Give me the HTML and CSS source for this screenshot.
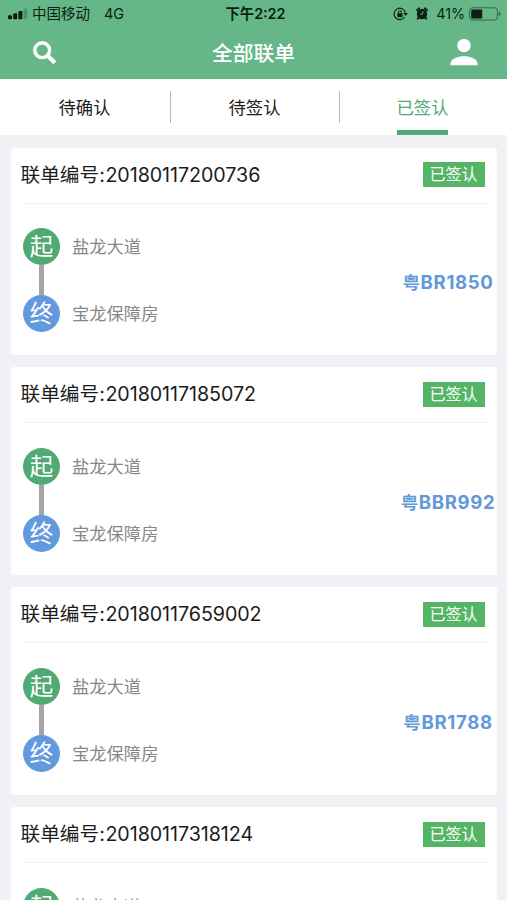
FILE: index.html
```html
<!DOCTYPE html>
<html lang="zh-CN">
<head>
<meta charset="utf-8">
<title>全部联单</title>
<link rel="stylesheet" href="styles.css">
</head>
<body>
<header class="header">
  <div class="status">
    <div class="status-left">
      <svg class="signal" width="20" height="12" viewBox="0 0 20 12"><rect x="0" y="7.2" width="4" height="4" rx="1"/><rect x="5.2" y="5.3" width="4" height="5.9" rx="1"/><rect x="10.4" y="3" width="4" height="8.2" rx="1"/><rect x="15.6" y="0.4" width="3.6" height="10.8" rx="1" opacity=".25"/></svg>
      <span class="carrier">中国移动</span><span class="network">4G</span>
    </div>
    <div class="clock">下午2:22</div>
    <div class="status-right">
      <svg class="lock" width="15" height="14" viewBox="0 0 15 14"><path d="M11.600 10A5.700 5.700 0 1 1 12.300 5.500" fill="none" stroke="#0b1f14" stroke-width="1.200"/><path d="M10.200 6h4.600l-2.200 3z"/><rect x="4.300" y="6.200" width="5.200" height="4" rx=".6"/><path d="M5.400 6.400V5.200a1.500 1.500 0 0 1 3 0v1.200" fill="none" stroke="#0b1f14"/></svg>
      <svg class="alarm" width="12" height="13" viewBox="0 0 12 13"><circle cx="6" cy="7" r="5.200"/><path d="M1 3.200 3.200 1.300M11 3.200 8.800 1.300M2.500 10.500l-.8 1.400M9.500 10.500l.8 1.400" stroke="#0b1f14" stroke-width="1.800" stroke-linecap="round"/><path d="M7.200 4.500 6.200 7.300H4.300" fill="none" stroke="#66b788" stroke-width="1"/></svg>
      <span class="percent">41%</span>
      <svg class="battery" width="32" height="14" viewBox="0 0 32 14"><rect x=".6" y=".8" width="27.800" height="12.200" rx="2.800" fill="none" stroke="#35634a" stroke-width="1"/><rect x="2.200" y="2.400" width="11" height="9" rx="1"/><path d="M29.700 4.800q2 .5 2 2.100t-2 2.100z" fill="#35634a"/></svg>
    </div>
  </div>
  <div class="nav">
    <svg class="search" width="24" height="24" viewBox="0 0 24 24"><circle cx="9.200" cy="9.200" r="7.400" fill="none" stroke="#fff" stroke-width="3.400"/><path d="m14.500 14.500 7.300 7.300" stroke="#fff" stroke-width="4.200"/></svg>
    <h1 class="title">全部联单</h1>
    <svg class="user" width="28" height="28" viewBox="0 0 28 28"><circle cx="14" cy="6.600" r="6.700"/><path d="M.5 26.200v-1.500C.5 19.700 7.500 17.200 14 17.200s13.500 2.500 13.500 7.500v1.500z"/></svg>
  </div>
</header>
<nav class="tabs">
  <a class="tab"><span class="tab-label">待确认</span></a>
  <a class="tab"><span class="tab-label">待签认</span></a>
  <a class="tab active"><span class="tab-label">已签认</span></a>
</nav>
<main class="list">
  <article class="card">
    <div class="card-head"><h2 class="number">联单编号:<span class="digits">20180117200736</span></h2><span class="badge">已签认</span></div>
    <div class="card-body">
      <div class="route">
        <div class="stop"><i class="dot start">起</i><span>盐龙大道</span></div>
        <div class="link"></div>
        <div class="stop"><i class="dot end">终</i><span>宝龙保障房</span></div>
      </div>
      <div class="plate"><span class="province">粤</span>BR1850</div>
    </div>
  </article>
  <article class="card">
    <div class="card-head"><h2 class="number">联单编号:<span class="digits">20180117185072</span></h2><span class="badge">已签认</span></div>
    <div class="card-body">
      <div class="route">
        <div class="stop"><i class="dot start">起</i><span>盐龙大道</span></div>
        <div class="link"></div>
        <div class="stop"><i class="dot end">终</i><span>宝龙保障房</span></div>
      </div>
      <div class="plate"><span class="province">粤</span>BBR992</div>
    </div>
  </article>
  <article class="card">
    <div class="card-head"><h2 class="number">联单编号:<span class="digits">20180117659002</span></h2><span class="badge">已签认</span></div>
    <div class="card-body">
      <div class="route">
        <div class="stop"><i class="dot start">起</i><span>盐龙大道</span></div>
        <div class="link"></div>
        <div class="stop"><i class="dot end">终</i><span>宝龙保障房</span></div>
      </div>
      <div class="plate"><span class="province">粤</span>BR1788</div>
    </div>
  </article>
  <article class="card">
    <div class="card-head"><h2 class="number">联单编号:<span class="digits">20180117318124</span></h2><span class="badge">已签认</span></div>
    <div class="card-body">
      <div class="route">
        <div class="stop"><i class="dot start">起</i><span>盐龙大道</span></div>
      </div>
    </div>
  </article>
</main>
</body>
</html>
```
FILE: styles.css
```css
* { box-sizing: border-box; }

body {
  margin: 0;
  height: 900px;
  overflow: hidden;
  display: flex;
  flex-direction: column;
  background: #eff1f5;
  color: #1c1c1c;
  font-family: Inter, "Noto Sans CJK SC", sans-serif;
}

svg { display: block; flex: none; }

.header {
  height: 79px;
  flex: none;
  background: #66b788;
}

.status {
  height: 27px;
  display: grid;
  grid-template-columns: 1fr auto 1fr;
  align-items: center;
  padding: 0 6px 0 8px;
  color: #0b1f14;
  fill: #0b1f14;
  font-size: 14.5px;
  line-height: 27px;
}

.status-left,
.status-right {
  display: flex;
  align-items: center;
  height: 26px;
}

.status-right { justify-content: flex-end; }
.carrier { margin-left: 4px; }
.network { margin-left: 14px; }
.clock { font-weight: 600; font-size: 14.3px; padding-left: 2px; }
.alarm { margin-left: 8px; }
.percent { margin: 0 4px 0 8px; font-size: 14.3px; }

.nav {
  height: 52px;
  display: flex;
  align-items: center;
  justify-content: space-between;
  padding: 0 29px 0 33px;
}

.title {
  margin: 0;
  padding-top: 1px;
  color: #fff;
  font-size: 20.8px;
  font-weight: 500;
  line-height: 30px;
}

.user { fill: #fff; }

.tabs {
  height: 56px;
  flex: none;
  display: grid;
  grid-template-columns: 171px 169px 1fr;
  background: #fff;
}

.tab {
  display: flex;
  justify-content: center;
  padding-right: 2px;
  background: linear-gradient(#b8b8b8, #b8b8b8) right 12px / 1.5px 32px no-repeat;
  font-size: 17.3px;
  line-height: 58px;
}

.tab.active { background: none; color: #52aa75; }
.tab.active .tab-label { border-bottom: 5px solid #52aa75; height: 56px; }

.list {
  display: flex;
  flex-direction: column;
  gap: 12.2px;
  padding: 12.6px 10px 0 10.5px;
}

.card {
  height: 207.7px;
  flex: none;
  background: #fff;
  border-radius: 3px;
}

.card-head {
  height: 56px;
  margin: 0 9.5px 0 10px;
  display: flex;
  align-items: center;
  justify-content: space-between;
  border-bottom: 1.5px solid #f3f3f4;
  padding: 0 3px 1px 0;
}

.number {
  margin: 0;
  font-size: 19.7px;
  font-weight: 400;
  line-height: 54px;
}

.digits { letter-spacing: -0.07px; margin-left: 0.5px; }

.badge {
  width: 62px;
  height: 25px;
  background: #54b565;
  color: #fff;
  font-size: 16px;
  line-height: 24px;
  text-align: center;
}

.card-body {
  display: flex;
  justify-content: space-between;
  padding: 24.5px 0 0 12.5px;
}

.stop {
  display: flex;
  align-items: center;
  gap: 12px;
  color: #888;
  font-size: 17.3px;
  line-height: 37px;
}

.dot {
  width: 37px;
  height: 37px;
  border-radius: 50%;
  color: #fff;
  font-size: 23.5px;
  font-style: normal;
  line-height: 37px;
  text-align: center;
}

.start { background: #51aa73; }
.end { background: #6299df; }

.link {
  width: 5px;
  height: 30px;
  margin-left: 16px;
  background: #a5a5a5;
}

.plate {
  width: 98px;
  padding-top: 41px;
  color: #6299d8;
  font-size: 18.6px;
  font-weight: 700;
  letter-spacing: 0.65px;
  line-height: 26px;
  text-align: center;
  white-space: nowrap;
}

.province { font-size: 17.5px; }
```
